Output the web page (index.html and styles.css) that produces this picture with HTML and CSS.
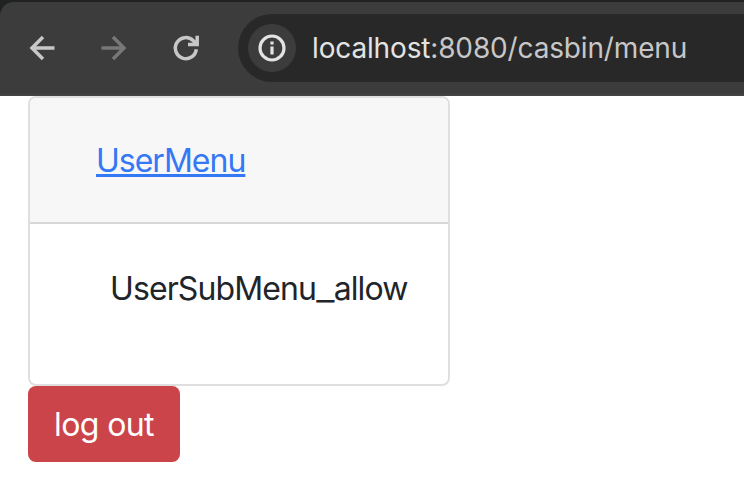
FILE: index.html
```html
<!DOCTYPE html>
<html lang="en">
<head>
<meta charset="utf-8">
<title>Menu</title>
<link rel="stylesheet" href="styles.css">
</head>
<body>
<header class="window">
  <div class="toolbar">
    <svg class="nav" viewBox="0 0 32 32"><path d="M28.500 16H8M17 5 6 16 17 27"/></svg>
    <svg class="nav dim" viewBox="0 0 32 32"><path d="M3.500 16H24M15 5 26 16 15 27"/></svg>
    <svg class="nav" viewBox="0 0 32 32"><path d="M26.300 17.200A10.500 10.500 0 1 1 23.300 8.700L27 12.400M27.200 3.800V12.600H18"/></svg>
    <div class="address">
      <span class="info"><svg viewBox="0 0 28 28"><circle cx="14" cy="14" r="12"/><path d="M14 12.500v8M14 7.500v3"/></svg></span>
      <span class="url"><span class="host">localhost</span>:8080/casbin/menu</span>
    </div>
  </div>
</header>
<main>
  <section class="card">
    <div class="card-header"><a href="#">UserMenu</a></div>
    <div class="card-body">UserSubMenu<span class="underscore">_</span>allow</div>
  </section>
  <button class="logout">log out</button>
</main>
</body>
</html>
```
FILE: styles.css
```css
* { box-sizing: border-box; }
body { margin: 0; background: #fff; color: #212529; font: 32px/48px Inter, sans-serif; }
.window { height: 96px; background: #202121; padding-top: 2px; }
.toolbar { height: 94px; background: #3c3c3c; border-bottom: 2px solid #444243; border-top-left-radius: 14px; display: flex; align-items: center; padding-left: 26px; }
.nav { width: 32px; height: 32px; margin-right: 40px; fill: none; stroke: #c7c7c7; stroke-width: 3.500; }
.dim { stroke: #777; }
.address { flex: 1; height: 68px; margin-left: -4px; padding-left: 10px; display: flex; align-items: center; background: #282828; border-radius: 34px 0 0 34px; }
.info { width: 48px; height: 48px; border-radius: 50%; background: #3c3c3c; display: flex; align-items: center; justify-content: center; }
.info svg { width: 28px; height: 28px; fill: none; stroke: #e3e3e3; stroke-width: 3.200; }
.url { margin-left: 16px; color: #c7c7c7; font: 28px/40px Inter, sans-serif; letter-spacing: -0.150px; white-space: nowrap; }
.host { color: #e3e3e3; }
main { padding-left: 28px; }
.card { width: 422px; height: 290px; border: 2px solid #dfdfdf; border-radius: 8px; overflow: hidden; }
.card-header { height: 126px; padding: 39px 66px; background: #f7f7f7; border-bottom: 2px solid #d8d8d8; letter-spacing: -1px; }
.card-header a { color: #3478f6; text-decoration-thickness: 3px; text-underline-offset: 2px; text-decoration-skip-ink: none; }
.card-body { padding: 41px 0 0 80px; letter-spacing: -0.900px; white-space: nowrap; }
.underscore { display: inline-block; transform: scaleX(1.250); margin: 0 2px; }
.logout { display: block; width: 152px; height: 76px; border: 0; border-radius: 8px; background: #cb444a; color: #fff; font: inherit; letter-spacing: -0.600px; padding: 2px 0 0; }
```
